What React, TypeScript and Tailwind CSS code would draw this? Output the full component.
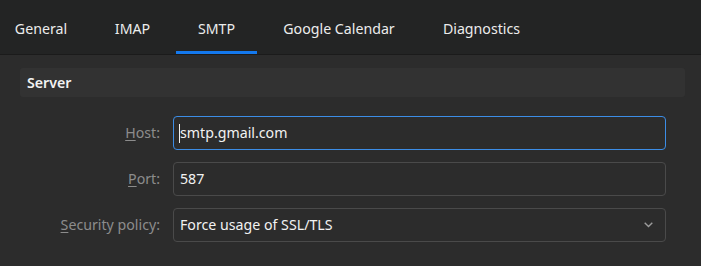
import React from 'react'

const font = { fontFamily: '"Segoe UI", "Noto Sans", sans-serif' }

const tabs = [
  { label: 'General', cls: 'w-[82px]' },
  { label: 'IMAP', cls: 'ml-[10px] w-[81px]' },
  { label: 'SMTP', cls: 'ml-[3px] w-[81px]', active: true },
  { label: 'Google Calendar', cls: 'ml-[4px] w-[156px]' },
  { label: 'Diagnostics', cls: 'ml-[4px] w-[121px]' },
]

const Label: React.FC<{ k: string; rest: string }> = ({ k, rest }) => (
  <div className="flex items-center justify-end text-[14.2px] text-[#8c8c8c]">
    <span className="underline underline-offset-2 decoration-1">{k}</span>
    {rest}
  </div>
)

const App: React.FC = () => {
  return (
    <div className="w-[701px] h-[266px] bg-[#2c2c2c] overflow-hidden" style={font}>
      {/* Tabs */}
      <div className="flex h-[55px] bg-[#232424] border-b border-[#1b1b1b]">
        {tabs.map(t => (
          <div key={t.label} className={`relative flex items-center justify-center text-[14.2px] text-[#ececec] ${t.cls}`}>
            <span className="pt-[4px]">{t.label}</span>
            {t.active && <div className="absolute left-0 right-0 bottom-0 h-[3px] bg-[#1479ee]" />}
          </div>
        ))}
      </div>

      {/* Server header */}
      <div className="mt-[13px] ml-5 mr-4 h-[29px] rounded-[3px] bg-[#323232] px-[7px] flex items-center">
        <span className="text-[14.2px] font-semibold text-[#f2f2f2] pt-px">Server</span>
      </div>

      {/* Form */}
      <div className="grid grid-cols-[160px_1fr] gap-x-[13px] gap-y-3 mt-[19px] pr-[35px]">
        <Label k="H" rest="ost:" />
        <div className="h-[34px] rounded-[4px] border border-[#3c8de6] flex items-center px-[5px] text-[14.2px] text-[#f2f2f2]">
          <span className="w-px h-[19px] bg-[#f2f2f2]" />
          smtp.gmail.com
        </div>

        <Label k="P" rest="ort:" />
        <div className="h-[34px] rounded-[4px] border border-[#4a4a4a] flex items-center px-[6px] text-[14.2px] text-[#f2f2f2]">
          587
        </div>

        <Label k="S" rest="ecurity policy:" />
        <div className="h-[34px] rounded-[4px] border border-[#4a4a4a] flex items-center justify-between pl-[6px] pr-[12px] text-[14.2px] text-[#f2f2f2]">
          <span>Force usage of SSL/TLS</span>
          <svg width="9" height="6" viewBox="0 0 9 6" fill="none">
            <path d="M0.7 0.7 L4.5 4.5 L8.3 0.7" stroke="#9c9c9c" strokeWidth="1.4" />
          </svg>
        </div>
      </div>
    </div>
  )
}

export default App
